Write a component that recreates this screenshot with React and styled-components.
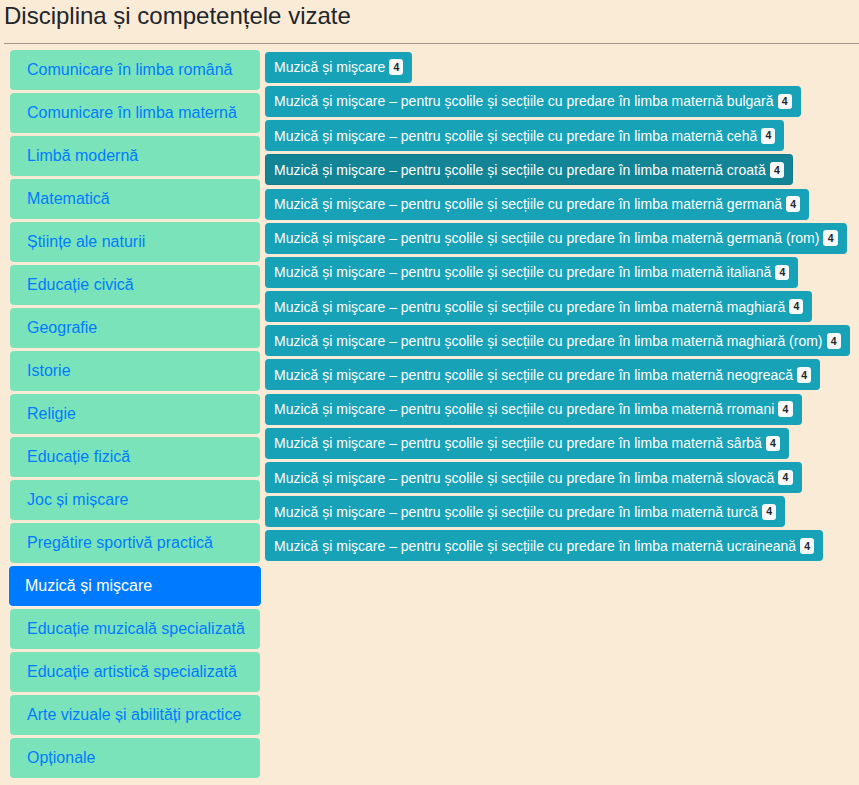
import React from 'react';
import styled, { createGlobalStyle } from 'styled-components';

const GlobalStyle = createGlobalStyle`
  html, body {
    margin: 0;
    padding: 0;
    background: #faebd7;
    font-family: "Liberation Sans", Arial, sans-serif;
    color: #212529;
  }
  * { box-sizing: border-box; }
`;

const Page = styled.div`
  padding: 0 0 0 4px;
`;

const Title = styled.h4`
  margin: 0;
  padding: 2px 0 0 0;
  font-size: 24px;
  font-weight: 400;
  line-height: 1.2;
`;

const Rule = styled.hr`
  margin: 12px 0 6px;
  border: 0;
  border-top: 1px solid #a3978b;
`;

const Columns = styled.div`
  display: flex;
  align-items: flex-start;
  gap: 5px;
  padding-left: 6px;
`;

const Subjects = styled.div`
  width: 250px;
  display: flex;
  flex-direction: column;
  gap: 3px;
`;

const Subject = styled.div`
  height: 40px;
  display: flex;
  align-items: center;
  padding-left: 17px;
  border-radius: 4px;
  font-size: 16px;
  background: ${p => (p.$active ? '#007bff' : '#7be3b9')};
  color: ${p => (p.$active ? '#fff' : '#007bff')};
  outline: ${p => (p.$active ? '1px dotted rgba(255,255,255,0.8)' : 'none')};
  margin: ${p => (p.$active ? '0 -1px' : '0')};
  padding-left: ${p => (p.$active ? '16px' : '17px')};
`;

const Competences = styled.div`
  display: flex;
  flex-direction: column;
  align-items: flex-start;
  gap: 3.2px;
  padding-top: 2px;
`;

const Chip = styled.div`
  display: inline-flex;
  align-items: center;
  height: 31px;
  padding: 0 8px;
  border-radius: 3.2px;
  border: 1px solid ${p => (p.$hover ? '#117a8b' : '#17a2b8')};
  background: ${p => (p.$hover ? '#138496' : '#17a2b8')};
  color: #fff;
  font-size: 14px;
  white-space: nowrap;
`;

const Badge = styled.span`
  display: inline-block;
  margin-left: 4px;
  padding: 2.6px 4.2px;
  border-radius: 3px;
  background: #f8f9fa;
  color: #212529;
  font-size: 10.5px;
  font-weight: 700;
  line-height: 1;
`;

const subjects = [
  'Comunicare în limba română',
  'Comunicare în limba maternă',
  'Limbă modernă',
  'Matematică',
  'Științe ale naturii',
  'Educație civică',
  'Geografie',
  'Istorie',
  'Religie',
  'Educație fizică',
  'Joc și mișcare',
  'Pregătire sportivă practică',
  'Muzică și mişcare',
  'Educație muzicală specializată',
  'Educație artistică specializată',
  'Arte vizuale și abilități practice',
  'Opționale',
];

const prefix = 'Muzică și mişcare – pentru școlile și secțiile cu predare în limba maternă ';
const langs = [
  'bulgară', 'cehă', 'croată', 'germană', 'germană (rom)', 'italiană', 'maghiară',
  'maghiară (rom)', 'neogreacă', 'rromani', 'sârbă', 'slovacă', 'turcă', 'ucraineană',
];
const competences = ['Muzică și mişcare', ...langs.map(l => prefix + l)];

export default function App() {
  return (
    <Page>
      <GlobalStyle />
      <Title>Disciplina și competențele vizate</Title>
      <Rule />
      <Columns>
        <Subjects>
          {subjects.map(s => (
            <Subject key={s} $active={s === 'Muzică și mişcare'}>{s}</Subject>
          ))}
        </Subjects>
        <Competences>
          {competences.map((c, i) => (
            <Chip key={c} $hover={i === 3}>
              {c}
              <Badge>4</Badge>
            </Chip>
          ))}
        </Competences>
      </Columns>
    </Page>
  );
}
